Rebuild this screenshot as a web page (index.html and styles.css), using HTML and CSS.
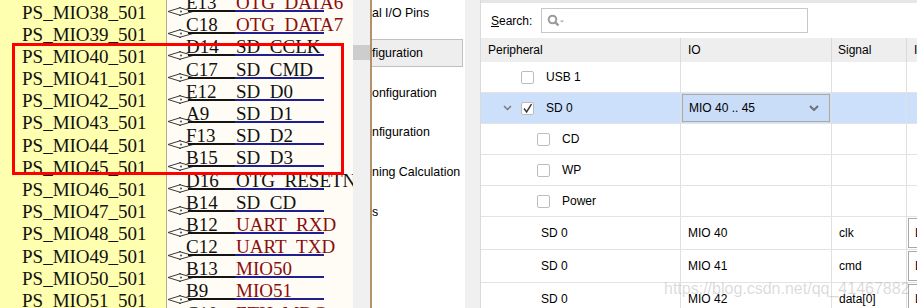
FILE: index.html
```html
<!DOCTYPE html>
<html lang="en">
<head>
    <meta charset="UTF-8">
    <title>MIO Configuration</title>
    <link rel="stylesheet" href="styles.css">
</head>
<body>
    <div class="sheet">
        <div class="ports">
            <div class="port-list">
                <div class="port-name">PS_MIO37_501</div>
                <div class="port-name">PS_MIO38_501</div>
                <div class="port-name">PS_MIO39_501</div>
                <div class="port-name">PS_MIO40_501</div>
                <div class="port-name">PS_MIO41_501</div>
                <div class="port-name">PS_MIO42_501</div>
                <div class="port-name">PS_MIO43_501</div>
                <div class="port-name">PS_MIO44_501</div>
                <div class="port-name">PS_MIO45_501</div>
                <div class="port-name">PS_MIO46_501</div>
                <div class="port-name">PS_MIO47_501</div>
                <div class="port-name">PS_MIO48_501</div>
                <div class="port-name">PS_MIO49_501</div>
                <div class="port-name">PS_MIO50_501</div>
                <div class="port-name">PS_MIO51_501</div>
            </div>
        </div>
        <div class="wires">
            <div class="wire-list">
                <div class="wire red"><svg class="marker" viewBox="0 0 27 9"><path d="M14 0.5 L1 4.5 L14 8.5 M12 0.5 L26 4.5 L12 8.5"/><circle cx="14" cy="4.5" r="0.9"/></svg><span class="pin">E13</span><span class="net">OTG_DATA6</span></div>
                <div class="wire red"><svg class="marker" viewBox="0 0 27 9"><path d="M14 0.5 L1 4.5 L14 8.5 M12 0.5 L26 4.5 L12 8.5"/><circle cx="14" cy="4.5" r="0.9"/></svg><span class="pin">C18</span><span class="net">OTG_DATA7</span></div>
                <div class="wire"><svg class="marker" viewBox="0 0 27 9"><path d="M14 0.5 L1 4.5 L14 8.5 M12 0.5 L26 4.5 L12 8.5"/><circle cx="14" cy="4.5" r="0.9"/></svg><span class="pin">D14</span><span class="net">SD_CCLK</span></div>
                <div class="wire"><svg class="marker" viewBox="0 0 27 9"><path d="M14 0.5 L1 4.5 L14 8.5 M12 0.5 L26 4.5 L12 8.5"/><circle cx="14" cy="4.5" r="0.9"/></svg><span class="pin">C17</span><span class="net">SD_CMD</span></div>
                <div class="wire"><svg class="marker" viewBox="0 0 27 9"><path d="M14 0.5 L1 4.5 L14 8.5 M12 0.5 L26 4.5 L12 8.5"/><circle cx="14" cy="4.5" r="0.9"/></svg><span class="pin">E12</span><span class="net">SD_D0</span></div>
                <div class="wire"><svg class="marker" viewBox="0 0 27 9"><path d="M14 0.5 L1 4.5 L14 8.5 M12 0.5 L26 4.5 L12 8.5"/><circle cx="14" cy="4.5" r="0.9"/></svg><span class="pin">A9</span><span class="net">SD_D1</span></div>
                <div class="wire"><svg class="marker" viewBox="0 0 27 9"><path d="M14 0.5 L1 4.5 L14 8.5 M12 0.5 L26 4.5 L12 8.5"/><circle cx="14" cy="4.5" r="0.9"/></svg><span class="pin">F13</span><span class="net">SD_D2</span></div>
                <div class="wire"><svg class="marker" viewBox="0 0 27 9"><path d="M14 0.5 L1 4.5 L14 8.5 M12 0.5 L26 4.5 L12 8.5"/><circle cx="14" cy="4.5" r="0.9"/></svg><span class="pin">B15</span><span class="net">SD_D3</span></div>
                <div class="wire"><svg class="marker" viewBox="0 0 27 9"><path d="M14 0.5 L1 4.5 L14 8.5 M12 0.5 L26 4.5 L12 8.5"/><circle cx="14" cy="4.5" r="0.9"/></svg><span class="pin">D16</span><span class="net">OTG_RESETN</span></div>
                <div class="wire"><svg class="marker" viewBox="0 0 27 9"><path d="M14 0.5 L1 4.5 L14 8.5 M12 0.5 L26 4.5 L12 8.5"/><circle cx="14" cy="4.5" r="0.9"/></svg><span class="pin">B14</span><span class="net">SD_CD</span></div>
                <div class="wire red"><svg class="marker" viewBox="0 0 27 9"><path d="M14 0.5 L1 4.5 L14 8.5 M12 0.5 L26 4.5 L12 8.5"/><circle cx="14" cy="4.5" r="0.9"/></svg><span class="pin">B12</span><span class="net">UART_RXD</span></div>
                <div class="wire red"><svg class="marker" viewBox="0 0 27 9"><path d="M14 0.5 L1 4.5 L14 8.5 M12 0.5 L26 4.5 L12 8.5"/><circle cx="14" cy="4.5" r="0.9"/></svg><span class="pin">C12</span><span class="net">UART_TXD</span></div>
                <div class="wire red"><svg class="marker" viewBox="0 0 27 9"><path d="M14 0.5 L1 4.5 L14 8.5 M12 0.5 L26 4.5 L12 8.5"/><circle cx="14" cy="4.5" r="0.9"/></svg><span class="pin">B13</span><span class="net">MIO50</span></div>
                <div class="wire red"><svg class="marker" viewBox="0 0 27 9"><path d="M14 0.5 L1 4.5 L14 8.5 M12 0.5 L26 4.5 L12 8.5"/><circle cx="14" cy="4.5" r="0.9"/></svg><span class="pin">B9</span><span class="net">MIO51</span></div>
                <div class="wire red"><svg class="marker" viewBox="0 0 27 9"><path d="M14 0.5 L1 4.5 L14 8.5 M12 0.5 L26 4.5 L12 8.5"/><circle cx="14" cy="4.5" r="0.9"/></svg><span class="pin">C10</span><span class="net">ETH_MDC</span></div>
            </div>
        </div>
        <div class="focus"></div>
    </div>

    <div class="vscroll"><div class="thumb"></div></div>
    <div class="divider"></div>

    <div class="nav">
        <div class="nav-item first">al I/O Pins</div>
        <div class="nav-item selected">figuration</div>
        <div class="nav-item">onfiguration</div>
        <div class="nav-item">nfiguration</div>
        <div class="nav-item">ning Calculation</div>
        <div class="nav-item">s</div>
    </div>
    <div class="gutter"></div>

    <div class="panel">
        <div class="search">
            <span class="search-label"><u>S</u>earch:</span>
            <div class="search-box">
                <svg class="search-icon" width="18" height="13" viewBox="0 0 18 13">
                    <circle cx="5.5" cy="5.5" r="3.8" fill="none" stroke="#9b9b9b" stroke-width="2"/>
                    <line x1="8.3" y1="8.3" x2="11.5" y2="11.5" stroke="#9b9b9b" stroke-width="2.4"/>
                    <polygon points="13,6.5 17,6.5 15,8.5" fill="#a8a8a8"/>
                </svg>
            </div>
        </div>

        <div class="table">
            <div class="row head">
                <div class="cell">Peripheral</div>
                <div class="cell">IO</div>
                <div class="cell">Signal</div>
                <div class="cell">IO Type</div>
            </div>
            <div class="row">
                <div class="cell tree lvl1"><span class="check"></span><span class="label">USB 1</span></div>
                <div class="cell"></div>
                <div class="cell"></div>
                <div class="cell"></div>
            </div>
            <div class="row selected">
                <div class="cell tree open">
                    <svg class="expander" width="9" height="6" viewBox="0 0 9 6"><polyline points="1,1 4.5,4.5 8,1" fill="none" stroke="#767676" stroke-width="1.4"/></svg>
                    <span class="check"><svg width="11" height="11" viewBox="0 0 11 11"><polyline points="2,5.5 4.6,9 9.5,1.2" fill="none" stroke="#3c3c3c" stroke-width="1.5"/></svg></span>
                    <span class="label">SD 0</span>
                </div>
                <div class="cell boxed">
                    <div class="combo blue">
                        <span>MIO 40 .. 45</span>
                        <svg width="10" height="6" viewBox="0 0 10 6"><polyline points="1,1 5,5 9,1" fill="none" stroke="#707070" stroke-width="2"/></svg>
                    </div>
                </div>
                <div class="cell"></div>
                <div class="cell"></div>
            </div>
            <div class="row">
                <div class="cell tree lvl2"><span class="check"></span><span class="label">CD</span></div>
                <div class="cell"></div>
                <div class="cell"></div>
                <div class="cell"></div>
            </div>
            <div class="row">
                <div class="cell tree lvl2"><span class="check"></span><span class="label">WP</span></div>
                <div class="cell"></div>
                <div class="cell"></div>
                <div class="cell"></div>
            </div>
            <div class="row">
                <div class="cell tree lvl2"><span class="check"></span><span class="label">Power</span></div>
                <div class="cell"></div>
                <div class="cell"></div>
                <div class="cell"></div>
            </div>
            <div class="row tall">
                <div class="cell leaf">SD 0</div>
                <div class="cell">MIO 40</div>
                <div class="cell">clk</div>
                <div class="cell boxed"><div class="combo">LVCMOS 1.8V</div></div>
            </div>
            <div class="row tall">
                <div class="cell leaf">SD 0</div>
                <div class="cell">MIO 41</div>
                <div class="cell">cmd</div>
                <div class="cell boxed"><div class="combo">LVCMOS 1.8V</div></div>
            </div>
            <div class="row tall">
                <div class="cell leaf">SD 0</div>
                <div class="cell">MIO 42</div>
                <div class="cell">data[0]</div>
                <div class="cell boxed"><div class="combo">LVCMOS 1.8V</div></div>
            </div>
        </div>
    </div>

    <div class="watermark">https://blog.csdn.net/qq_41467882</div>
</body>
</html>
```

FILE: styles.css
```css
body {
    margin: 0;
    width: 917px;
    height: 308px;
    overflow: hidden;
    display: flex;
    position: relative;
    font-family: "Liberation Sans", Arial, sans-serif;
    font-size: 12px;
    color: #000;
    background-color: #fff;
}

/* schematic */
.sheet {
    position: relative;
    width: 353px;
    flex: none;
    display: flex;
}
.ports {
    width: 166px;
    border-right: 1px solid #bda98a;
    background-color: #ffffb0;
    overflow: hidden;
}
.port-list {
    margin-top: -20.7px;
}
.port-name {
    height: 22.2px;
    line-height: 22.2px;
    padding-left: 22px;
    font-family: "Liberation Serif", "Times New Roman", serif;
    font-size: 19px;
    color: #111;
    white-space: nowrap;
}
.wires {
    flex: 1;
    background-color: #fffcf5;
    overflow: hidden;
}
.wire-list {
    margin-top: -10.2px;
}
.wire {
    position: relative;
    height: 22.2px;
    display: flex;
    align-items: flex-end;
    font-family: "Liberation Serif", "Times New Roman", serif;
    font-size: 19px;
    line-height: 19px;
    color: #111;
    white-space: nowrap;
}
.wire::before {
    content: "";
    position: absolute;
    left: 21px;
    bottom: 0;
    width: 47px;
    height: 2px;
    background-color: #141414;
}
.wire::after {
    content: "";
    position: absolute;
    left: 68px;
    bottom: 0;
    width: 89px;
    height: 2px;
    background-color: #1f1f8f;
}
.marker {
    flex: none;
    width: 27px;
    height: 9px;
    margin-right: -8px;
    margin-bottom: -3.5px;
    overflow: visible;
}
.marker path {
    fill: none;
    stroke: #3a3a3a;
    stroke-width: 1;
}
.marker circle {
    fill: #3a3a3a;
}
.pin {
    flex: none;
    width: 50px;
}
.red .net {
    color: #8c0d0d;
}
.focus {
    position: absolute;
    left: 12px;
    top: 43px;
    width: 332px;
    height: 132px;
    border: 3px solid #ff0000;
    box-sizing: border-box;
}

/* scroll strip and nav */
.vscroll {
    width: 17px;
    flex: none;
    background-color: #f0f0f0;
}
.vscroll .thumb {
    margin-top: 45px;
    height: 15px;
    background-color: #cdcdcd;
}
.divider {
    width: 2px;
    flex: none;
    background-color: #b39269;
}
.nav {
    width: 93px;
    flex: none;
    display: flex;
    flex-direction: column;
    gap: 11.8px;
    overflow: hidden;
    background-color: #fff;
    font-size: 12.4px;
}
.nav-item {
    height: 28px;
    line-height: 28px;
    white-space: nowrap;
}
.nav-item.first {
    margin-top: -1px;
}
.nav-item.selected {
    margin-left: -2px;
    margin-right: 2px;
    padding-left: 1px;
    line-height: 26px;
    border: 1px solid #c0c0c0;
    background-color: #eeeeee;
    box-sizing: border-box;
}
.gutter {
    width: 15px;
    flex: none;
    background-color: #f0f0f0;
    border-right: 1px solid #dadada;
}

/* peripheral table */
.panel {
    flex: 1;
    overflow: hidden;
    border-top: 3px solid #e6e6e6;
    background-color: #fff;
}
.search {
    height: 35px;
    display: flex;
    align-items: center;
    gap: 8px;
    padding-left: 10px;
}
.search-label {
    width: 42px;
}
.search-box {
    width: 267px;
    height: 25px;
    box-sizing: border-box;
    border: 1px solid #c8c8c8;
    display: flex;
    align-items: center;
    padding-left: 5px;
}
.table {
    width: 546px;
}
.row {
    display: grid;
    grid-template-columns: 200px 151px 75px 120px;
    height: 31px;
    box-sizing: border-box;
    border-bottom: 1px solid #e3e3e3;
}
.row.tall {
    height: 33px;
}
.row.head {
    height: 24px;
    border-bottom: none;
    background-color: #eeeeee;
}
.row.selected {
    background-color: #cce0fb;
}
.cell {
    display: flex;
    align-items: center;
    padding-left: 7px;
    border-right: 1px solid #e0e0e0;
    white-space: nowrap;
    overflow: hidden;
}
.row.head .cell {
    border-right-color: #d9d9d9;
}
.row.head .cell:nth-child(3) {
    padding-left: 6px;
}
.cell.tree {
    padding-left: 40px;
}
.cell.tree.open {
    padding-left: 22px;
}
.cell.tree.lvl2 {
    padding-left: 56px;
}
.cell.leaf {
    padding-left: 60px;
}
.expander {
    margin-right: 9px;
}
.check {
    width: 13px;
    height: 13px;
    flex: none;
    box-sizing: border-box;
    border: 1px solid #bdbdbd;
    border-radius: 2px;
    background-color: #fff;
    display: flex;
}
.label {
    margin-left: 12px;
}
.cell.boxed {
    padding: 1px;
    align-items: stretch;
}
.combo {
    flex: 1;
    display: flex;
    align-items: center;
    justify-content: space-between;
    padding: 0 10px 0 6px;
    border: 1px solid #a9a9a9;
    background-color: #fff;
    white-space: nowrap;
}
.combo.blue {
    background-color: #c9dcf8;
}

.watermark {
    position: absolute;
    left: 664px;
    top: 281px;
    font-size: 16px;
    line-height: 16px;
    color: rgba(150, 150, 150, 0.35);
    white-space: nowrap;
}
```
